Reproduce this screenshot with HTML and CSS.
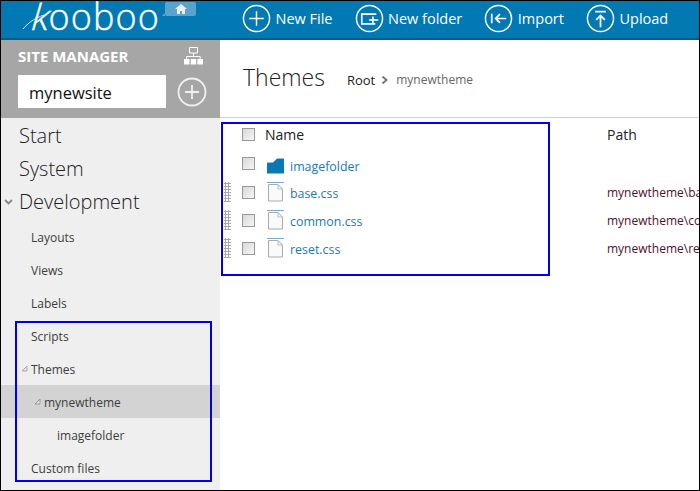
FILE: index.html
```html
<!DOCTYPE html>
<html lang="en">
<head>
<meta charset="utf-8">
<title>Kooboo themes</title>
<link rel="stylesheet" href="styles.css">
</head>
<body>
<div class="frame">
  <header class="topbar">
    <div class="brand">
      <svg class="swoosh" width="24" height="24" viewBox="0 0 24 24"><path d="M1 23C6 17 12 12.500 22 9" fill="none" stroke="#d5ebf5" stroke-width="1"/></svg>
      <span class="wordmark"><span class="k">k</span>ooboo</span>
      <span class="home-tab">
        <svg width="12" height="10" viewBox="0 0 12 10"><path d="M6 0L12 5H10V10H7V7H5V10H2V5H0Z" fill="#e8eef2"/></svg>
      </span>
    </div>
    <nav class="actions">
      <a class="action"><svg class="ring" viewBox="0 0 30 30"><circle cx="15" cy="15" r="13.500"/><path d="M15 7.500V22.500M7.500 15H22.500"/></svg>New File</a>
      <a class="action"><svg class="ring" viewBox="0 0 30 30"><circle cx="15" cy="15" r="13.500"/><path d="M22 10.500H7V20.500H21M18.500 13V20M14.500 16.500H24" stroke-width="1.700"/></svg>New folder</a>
      <a class="action"><svg class="ring" viewBox="0 0 30 30"><circle cx="15" cy="15" r="13.500"/><path d="M8 10V20M23 15H12M16.500 10.500L12 15L16.500 19.500" stroke-width="1.800"/></svg>Import</a>
      <a class="action"><svg class="ring" viewBox="0 0 30 30"><circle cx="15" cy="15" r="13.500"/><path d="M9.500 8H20.500M15 24V12M10.500 16.500L15 12L19.500 16.500" stroke-width="1.800"/></svg>Upload</a>
    </nav>
  </header>
  <div class="body">
    <aside class="sidebar">
      <div class="site-manager">
        <div class="sm-title">
          <span>SITE MANAGER</span>
          <svg width="19" height="18" viewBox="0 0 19 18"><path d="M5.500 .5H13.500V6H5.500Z" fill="none" stroke="#fff"/><path d="M0 12H5.500V17.500H0ZM6.700 12H12.200V17.500H6.700ZM13.400 12H19V17.500H13.400Z" fill="#fff"/><path d="M9.500 6V9.500M2.700 12V9.500H16.200V12" fill="none" stroke="#fff"/></svg>
        </div>
        <div class="sm-row">
          <div class="site-input">mynewsite</div>
          <svg class="sm-add" viewBox="0 0 30 30"><circle cx="15" cy="15" r="13.500"/><path d="M15 8V22M8 15H22"/></svg>
        </div>
      </div>
      <ul class="tree">
        <li class="top">Start</li>
        <li class="top">System</li>
        <li class="top"><svg class="chevron" width="9" height="6" viewBox="0 0 9 6"><path d="M1 1L4.500 4.500L8 1" fill="none" stroke="#888" stroke-width="1.800"/></svg>Development</li>
        <li class="sub first-sub">Layouts</li>
        <li class="sub">Views</li>
        <li class="sub">Labels</li>
        <li class="sub">Scripts</li>
        <li class="sub"><svg class="tri tri-themes" width="7" height="7" viewBox="0 0 7 7"><path d="M6 1V6H1Z" fill="#e4e4e4" stroke="#aaa"/></svg>Themes</li>
        <li class="sub sel"><svg class="tri tri-theme" width="7" height="7" viewBox="0 0 7 7"><path d="M6 1V6H1Z" fill="#e4e4e4" stroke="#999"/></svg>mynewtheme</li>
        <li class="sub deep">imagefolder</li>
        <li class="sub">Custom files</li>
      </ul>
      <div class="callout callout-side"></div>
    </aside>
    <main class="main">
      <div class="title-row">
        <h1>Themes</h1>
        <span class="crumb-root">Root</span>
        <svg class="crumb-sep" width="7" height="8" viewBox="0 0 7 8"><path d="M1.500 0.500L5.500 4L1.500 7.500" fill="none" stroke="#777" stroke-width="2"/></svg>
        <span class="crumb-cur">mynewtheme</span>
      </div>
      <div class="table">
        <div class="row head"><span class="grip none"></span><span class="check"></span><span class="name-head">Name</span><span class="path">Path</span></div>
        <div class="row folder"><span class="grip none"></span><span class="check"></span>
          <svg class="ficon folder-icon" width="18" height="16" viewBox="0 0 18 16"><path d="M0 5.500Q0 4.500 1 4.500H6L10 .5H17V15.500H0Z" fill="#0a78b4"/></svg>
          <a class="name">imagefolder</a></div>
        <div class="row file"><span class="grip"></span><span class="check"></span>
          <svg class="ficon" width="18" height="20" viewBox="0 0 18 20"><path d="M0 .5H17" stroke="#7aa8cc"/><path d="M1.500 2.500H11L15.500 7V19H1.500Z" fill="#fafafa" stroke="#aaa"/><path d="M11 2.500V7H15.500" fill="none" stroke="#bbb"/></svg>
          <a class="name">base.css</a><span class="path-val">mynewtheme\base.css</span></div>
        <div class="row file"><span class="grip"></span><span class="check"></span>
          <svg class="ficon" width="18" height="20" viewBox="0 0 18 20"><path d="M0 .5H17" stroke="#7aa8cc"/><path d="M1.500 2.500H11L15.500 7V19H1.500Z" fill="#fafafa" stroke="#aaa"/><path d="M11 2.500V7H15.500" fill="none" stroke="#bbb"/></svg>
          <a class="name">common.css</a><span class="path-val">mynewtheme\common.css</span></div>
        <div class="row file"><span class="grip"></span><span class="check"></span>
          <svg class="ficon" width="18" height="20" viewBox="0 0 18 20"><path d="M0 .5H17" stroke="#7aa8cc"/><path d="M1.500 2.500H11L15.500 7V19H1.500Z" fill="#fafafa" stroke="#aaa"/><path d="M11 2.500V7H15.500" fill="none" stroke="#bbb"/></svg>
          <a class="name">reset.css</a><span class="path-val">mynewtheme\reset.css</span></div>
      </div>
      <div class="callout callout-main"></div>
    </main>
  </div>
</div>
</body>
</html>
```
FILE: styles.css
```css
* { box-sizing: border-box; }
html, body { margin: 0; padding: 0; }
body { width: 700px; height: 491px; overflow: hidden; background: #fff; font-family: "Open Sans", "Noto Sans", sans-serif; }
.frame { width: 700px; height: 491px; border: 1px solid #000; display: flex; flex-direction: column; overflow: hidden; }
.topbar { height: 39px; flex: none; background: #0279b3; border-bottom: 2px solid #015f8d; display: flex; color: #fff; }
.brand { width: 219px; position: relative; flex: none; }
.swoosh { position: absolute; left: 21px; top: 5px; }
.wordmark { position: absolute; left: 29px; top: 0; font-weight: 300; font-size: 36px; line-height: 32px; letter-spacing: 1.100px; color: #fff; white-space: nowrap; -webkit-text-stroke: .4px #fff; }
.k { display: inline-block; transform: skewX(-16deg); transform-origin: 0 80%; }
.home-tab { position: absolute; left: 164px; top: 1px; width: 31px; height: 14px; background: #5aa3cb; border-radius: 2px; display: flex; justify-content: center; align-items: center; }
.home-tab::before { content: ""; position: absolute; left: -3px; bottom: 0; border-right: 3px solid #5aa3cb; border-top: 3px solid transparent; }
.actions { display: flex; align-items: center; font-size: 14.500px; padding-bottom: 3px; gap: 22px; margin-left: 22px; }
.action { display: flex; align-items: center; gap: 4.500px; color: #fff; }
.ring { width: 29px; height: 29px; fill: none; stroke: #fff; stroke-width: 1.500; flex: none; }
.body { flex: 1; display: flex; min-height: 0; }
.sidebar { width: 219px; flex: none; background: #efefef; position: relative; }
.site-manager { height: 78px; background: #a6a6a6; padding: 5px 0 0 17px; }
.sm-title { display: flex; justify-content: space-between; align-items: center; height: 22px; width: 185px; color: #fff; font-weight: 700; font-size: 15px; }
.sm-row { display: flex; align-items: center; margin-top: 8px; }
.site-input { width: 148px; height: 33px; background: #fff; color: #111; font-size: 16.500px; line-height: 35px; padding-left: 11px; }
.sm-add { width: 30px; height: 30px; margin-left: 11px; fill: none; stroke: #f0f0f0; stroke-width: 1.800; }
.tree { list-style: none; margin: 0; padding: 0; color: #333; }
.top { height: 33px; line-height: 35px; padding-left: 18px; font-size: 20px; font-weight: 300; position: relative; color: #222; }
.chevron { position: absolute; left: 3px; top: 15px; }
.sub { height: 33px; line-height: 35px; padding-left: 30px; font-size: 12px; position: relative; color: #3d3d3d; }
.first-sub { margin-top: 3px; }
.sel { background: #d3d3d3; padding-left: 43px; }
.deep { padding-left: 56px; }
.tri { position: absolute; }
.tri-themes { left: 20px; top: 13px; }
.tri-theme { left: 33px; top: 13px; }
.callout { position: absolute; border: 2px solid #0000f0; pointer-events: none; }
.callout-side { left: 14px; top: 281px; width: 197px; height: 161px; }
.main { flex: 1; position: relative; min-width: 0; overflow: hidden; }
.title-row { height: 78px; display: flex; align-items: center; border-bottom: 1px solid #cfcfcf; padding: 0 0 3px 23px; }
h1 { margin: 0; font-size: 23px; font-weight: 300; color: #222; }
.crumb-root { font-size: 13px; color: #222; margin-left: 22px; margin-top: 5px; }
.crumb-sep { margin: 5px 8px 0 6px; }
.crumb-cur { font-size: 12px; color: #666; margin-top: 5px; }
.row { display: flex; align-items: center; height: 28px; font-size: 12.400px; position: relative; white-space: nowrap; }
.head { height: 31px; font-size: 14px; color: #222; padding-top: 2px; }
.folder { height: 29px; }
.grip { width: 7px; height: 20px; margin-left: 4px; flex: none; background: radial-gradient(circle, #aaa 1px, transparent 1.200px) 0 0 / 3px 3px; }
.grip.none { visibility: hidden; }
.check { width: 13px; height: 13px; margin-left: 11px; border: 1px solid #999; background: linear-gradient(135deg, #d8d8d8, #f6f6f6); flex: none; }
.ficon { margin-left: 12px; flex: none; }
.folder-icon { margin-top: 5px; }
.name { margin-left: 5px; color: #1b7ab3; margin-top: 2px; }
.folder .name { margin-top: 6px; }
.name-head { margin-left: 10px; }
.path { position: absolute; left: 387px; }
.path-val { position: absolute; left: 387px; color: #4d1030; font-size: 12px; top: 6px; }
.callout-main { left: 1px; top: 82px; width: 329px; height: 154px; }
```
